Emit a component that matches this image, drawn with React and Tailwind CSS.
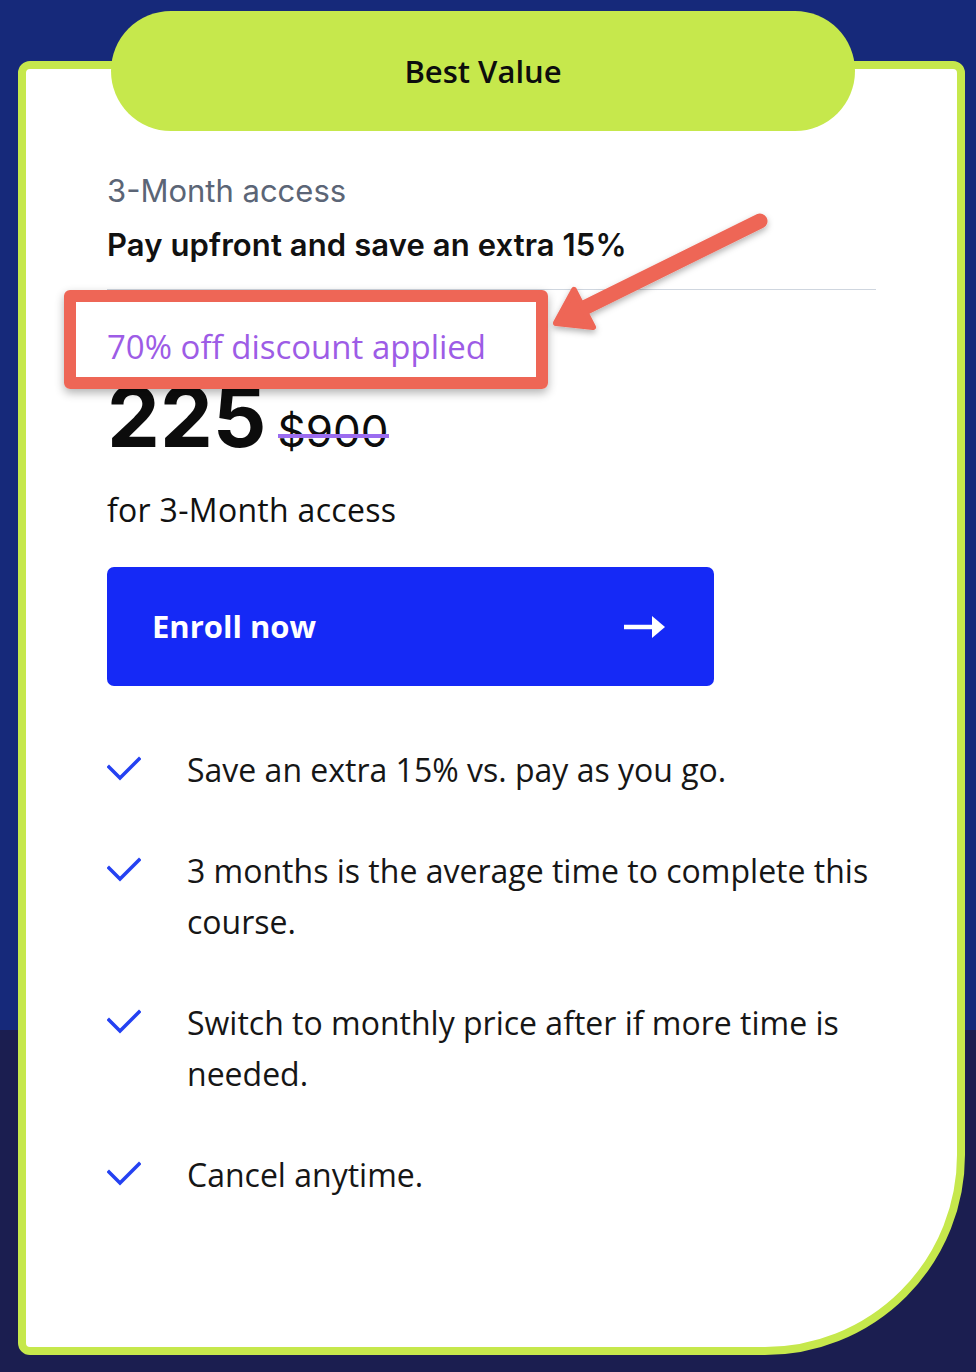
import React from 'react';

const features = [
  'Save an extra 15% vs. pay as you go.',
  '3 months is the average time to complete this course.',
  'Switch to monthly price after if more time is needed.',
  'Cancel anytime.',
];

const Check = () => (
  <svg width="34" height="26" viewBox="0 0 34 26" className="shrink-0 mt-[12px]">
    <polyline points="2,11 13,22 32,3" fill="none" stroke="#2441f2" strokeWidth="3.5" strokeLinecap="square" />
  </svg>
);

const App = () => {
  return (
    <div className="relative w-[976px] h-[1372px] overflow-hidden bg-[linear-gradient(to_bottom,#16297a_1030px,#1b1e50_1030px)]">
      {/* Card */}
      <div className="ml-[18px] mt-[61px] w-[947px] h-[1294px] bg-white border-[8px] border-[#c6e84c] rounded-[12px] rounded-br-[200px] px-[81px] pt-[104px]">
        <div className="font-['Inter',sans-serif] text-[31px] leading-[36px] text-[#5b6576]">3-Month access</div>
        <div className="mt-[18px] font-['Inter',sans-serif] font-semibold text-[31px] leading-[36px] text-[#111] tracking-[0.1px]">
          Pay upfront and save an extra 15%
        </div>
        <div className="mt-[26px] border-b border-[#cfd6df]" />
        <div className="mt-[37px] font-['Open_Sans',sans-serif] font-medium text-[33px] leading-[40px] text-[#9d5ce6]">
          70% off discount applied
        </div>
        <div className="mt-[10px] flex items-baseline gap-[11px] font-['Inter',sans-serif] text-[#0c0c0c]">
          <span className="text-[84px] leading-[80px] font-bold">225</span>
          <span className="relative text-[44px] leading-[40px]">
            $900
            <span className="absolute left-0 right-0 top-[23px] h-[4px] bg-[#9b6cf0]" />
          </span>
        </div>
        <div className="mt-[33px] font-['Open_Sans',sans-serif] font-medium text-[32px] leading-[40px] text-[#111] tracking-[0.3px]">
          for 3-Month access
        </div>
        <button className="mt-[37px] w-[607px] h-[119px] bg-[#1529f6] rounded-[7px] flex items-center justify-between pl-[45px] pr-[48px] text-white">
          <span className="font-['Open_Sans',sans-serif] font-bold text-[31px]">Enroll now</span>
          <svg width="44" height="24" viewBox="0 0 44 24">
            <line x1="2" y1="12" x2="34" y2="12" stroke="white" strokeWidth="4.5" />
            <polygon points="30,1 43,12 30,23" fill="white" />
          </svg>
        </button>
        <ul className="mt-[58px] flex flex-col gap-[50px]">
          {features.map((f) => (
            <li key={f} className="flex items-start gap-[46px]">
              <Check />
              <span className="font-['Open_Sans',sans-serif] text-[32px] leading-[51px] text-[#161616]">{f}</span>
            </li>
          ))}
        </ul>
      </div>

      {/* Best Value badge */}
      <div className="absolute left-[111px] top-[11px] w-[744px] h-[120px] rounded-full bg-[#c6e84c] flex items-center justify-center">
        <span className="font-['Open_Sans',sans-serif] font-semibold text-[31px] text-[#0d0d0d]">Best Value</span>
      </div>

      {/* Annotation box */}
      <div className="absolute left-[64px] top-[290px] w-[484px] h-[99px] border-[12px] border-[#ee6656] rounded-[6px] shadow-[0_4px_10px_rgba(0,0,0,0.3)]" />

      {/* Annotation arrow */}
      <svg className="absolute left-0 top-0" width="976" height="400" viewBox="0 0 976 400">
        <defs>
          <filter id="sh" x="-20%" y="-20%" width="140%" height="140%">
            <feDropShadow dx="0" dy="3" stdDeviation="3" floodColor="#000" floodOpacity="0.3" />
          </filter>
        </defs>
        <g filter="url(#sh)" fill="#ee6656" stroke="#ee6656">
          <line x1="760" y1="221" x2="580" y2="310" strokeWidth="15" strokeLinecap="round" />
          <polygon points="556,323 574,290 593,327" strokeWidth="6" strokeLinejoin="round" />
        </g>
      </svg>
    </div>
  );
};

export default App;
